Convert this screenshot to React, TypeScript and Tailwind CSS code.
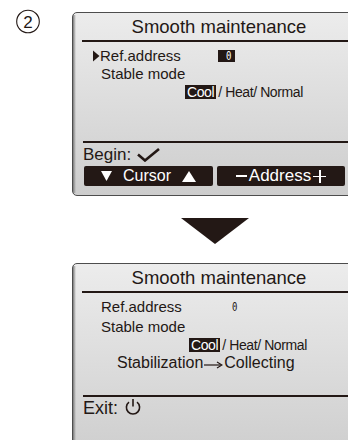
import React from 'react';

function Check() {
  return (
    <svg width="24" height="14" viewBox="0 0 24 14" className="ml-[6px]">
      <path d="M1 6.5 L8 12.5 L22 1" fill="none" stroke="#231815" strokeWidth="2.6" />
    </svg>
  );
}

function Power() {
  return (
    <svg width="18" height="18" viewBox="0 0 18 18" className="ml-[6px] -mt-[2px]">
      <path d="M5 4.2 A6.6 6.6 0 1 0 13 4.2" fill="none" stroke="#231815" strokeWidth="1.6" />
      <path d="M9 1 V8.5" stroke="#231815" strokeWidth="1.6" />
    </svg>
  );
}

function Arrow() {
  return (
    <svg width="19" height="10" viewBox="0 0 19 10" className="mx-[1px] mt-[3px]">
      <path d="M0 5 H17" stroke="#231815" strokeWidth="1.2" />
      <path d="M13 2 L18 5 L13 8" fill="none" stroke="#231815" strokeWidth="1.2" />
    </svg>
  );
}

// darker left edge of the lcd frame
function Edge() {
  return <div className="absolute left-0 top-[2px] bottom-[2px] w-[3px] bg-gradient-to-r from-[#7a7a7a] to-transparent" />;
}

function Header() {
  return (
    <div className="ml-[9px] mr-[57px] h-[29px] border-b-2 border-[#231815] flex items-end justify-center pb-[2px] pl-[2px]">
      <span className="text-[18.5px] leading-[22px] whitespace-nowrap">Smooth maintenance</span>
    </div>
  );
}

function Modes({ className }: { className: string }) {
  return (
    <div className={"flex items-center text-[14px] tracking-[-0.4px] " + className}>
      <span className="bg-[#231815] text-white px-[2px] leading-[14px]">Cool</span>
      <span className="ml-[2px] leading-[14px]">/ Heat/ Normal</span>
    </div>
  );
}

export default function App() {
  return (
    <div className="w-[348px] h-[440px] overflow-hidden bg-white text-[#231815] font-['Liberation_Sans',Arial,sans-serif]">
      <div className="flex pt-[12px]">
        <div className="w-[72px] shrink-0 pl-[9px]">
          <svg width="38" height="28" viewBox="0 0 38 28" className="-mt-[3px]">
            <circle cx="19" cy="12.5" r="11.3" fill="none" stroke="#231815" strokeWidth="1.1" />
            <text x="19" y="18.5" textAnchor="middle" fontSize="17" fontFamily="Liberation Sans, Arial, sans-serif" fill="#231815">2</text>
          </svg>
        </div>
        <div className="relative w-[340px] min-w-[340px] shrink-0 h-[184px] border border-[#4d4d4d] rounded-[5px] bg-gradient-to-b from-[#ececec] to-[#cdcdcd]">
          <Edge />
          <Header />
          <div className="mt-[5px] h-[18px] flex items-center text-[15px] leading-[18px]">
            <svg width="8" height="12" viewBox="0 0 8 12" className="ml-[19px]">
              <path d="M1 0.5 L7.5 6 L1 11.5 Z" fill="#231815" />
            </svg>
            <span>Ref.address</span>
            <span className="ml-[37px] bg-[#231815] text-white w-[17px] h-[12px] flex items-center justify-end pr-[3px] font-['DejaVu_Sans_Mono',monospace] text-[12px]">
              <span className="inline-block scale-x-75">0</span>
            </span>
          </div>
          <div className="h-[18px] flex items-center text-[15px] leading-[18px] pl-[28px]">Stable mode</div>
          <Modes className="mt-[2px] pl-[112px]" />
          <div className="mt-[42px] ml-[10px] mr-[20px] border-t-2 border-[#231815]" />
          <div className="h-[23px] flex items-center pl-[10px] text-[17px] leading-[20px]">
            Begin:
            <Check />
          </div>
          <div className="flex gap-[4px] pl-[11px]">
            <div className="w-[129px] h-[20px] bg-[#231815] rounded-[2px] text-white flex items-center justify-center text-[16px] leading-[20px]">
              <svg width="11" height="10" viewBox="0 0 11 10"><path d="M0 0 H11 L5.5 10 Z" fill="#fff" /></svg>
              <span className="mx-[11px]">Cursor</span>
              <svg width="14" height="11" viewBox="0 0 14 11"><path d="M0 11 H14 L7 0 Z" fill="#fff" /></svg>
            </div>
            <div className="w-[128px] h-[20px] bg-[#231815] rounded-[2px] text-white flex items-center justify-center text-[17px] leading-[20px]">
              <span className="w-[11px] h-[1.5px] bg-white mr-[2px]" />
              <span>Address</span>
              <span className="relative w-[13px] h-[13px] ml-[2px]">
                <span className="absolute left-0 top-[6px] w-[13px] h-[1.5px] bg-white" />
                <span className="absolute left-[6px] top-0 w-[1.5px] h-[13px] bg-white" />
              </span>
            </div>
          </div>
        </div>
      </div>

      <div className="flex justify-center pl-[82px] mt-[22px]">
        <svg width="68" height="26" viewBox="0 0 68 26">
          <path d="M0 0 H68 L34 26 Z" fill="#231815" />
        </svg>
      </div>

      <div className="flex pl-[72px] mt-[19px]">
        <div className="relative w-[340px] min-w-[340px] shrink-0 h-[200px] border border-[#4d4d4d] rounded-[5px] bg-gradient-to-b from-[#ececec] to-[#cdcdcd]">
          <Edge />
          <Header />
          <div className="mt-[4px] h-[20px] flex items-center text-[15px] leading-[20px] pl-[28px]">
            <span>Ref.address</span>
            <span className="ml-[49px] font-['DejaVu_Sans_Mono',monospace] text-[12px] inline-block scale-x-75">0</span>
          </div>
          <div className="h-[20px] flex items-center text-[15px] leading-[20px] pl-[28px]">Stable mode</div>
          <Modes className="mt-[1px] pl-[116px]" />
          <div className="h-[22px] flex items-center text-[16px] leading-[20px] pl-[44px]">
            Stabilization
            <Arrow />
            Collecting
          </div>
          <div className="mt-[21px] ml-[10px] mr-[20px] border-t-2 border-[#231815]" />
          <div className="h-[22px] flex items-center pl-[10px] text-[18px] leading-[22px]">
            Exit:
            <Power />
          </div>
        </div>
      </div>
    </div>
  );
}
